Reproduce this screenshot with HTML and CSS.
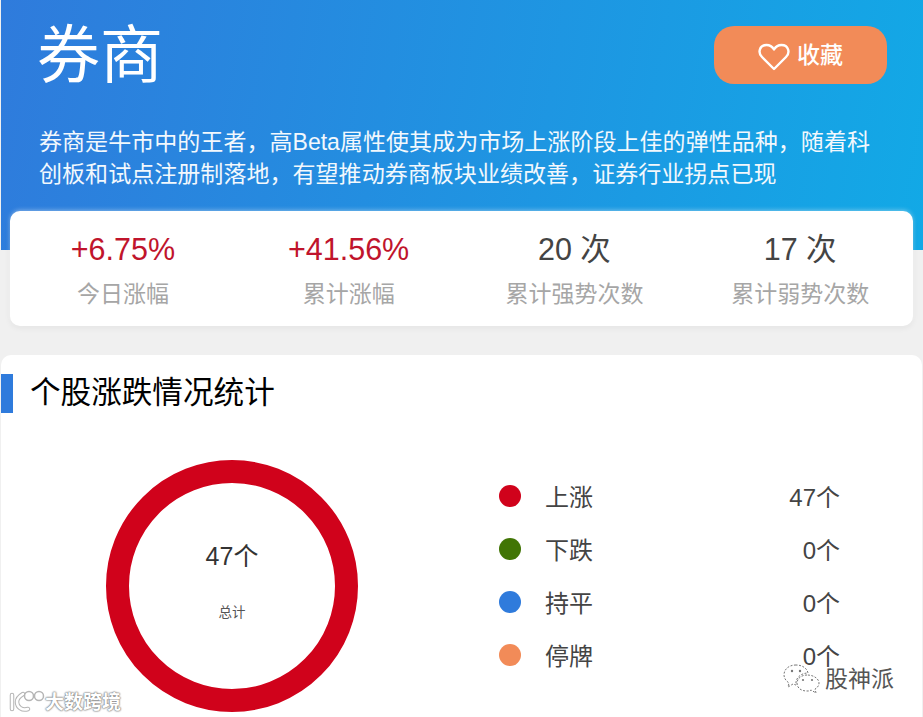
FILE: index.html
```html
<!DOCTYPE html>
<html lang="zh-CN">
<head>
    <meta charset="UTF-8">
    <meta name="viewport" content="width=device-width, initial-scale=1.0">
    <title>券商</title>
    <link rel="stylesheet" href="styles.css">
</head>
<body>
    <div class="hero">
        <div class="hero-top">
            <h1>券商</h1>
            <button class="fav">
                <svg class="heart" viewBox="0 0 32 28" width="32" height="28">
                    <path d="M16 26 L4 14 C-0.5 9.5 1.5 2 8.500 2 C12 2 14.500 4 16 6.500 C17.500 4 20 2 23.500 2 C30.500 2 32.500 9.500 28 14 Z" fill="none" stroke="#fff" stroke-width="2.4" stroke-linejoin="round"/>
                </svg>
                <span class="fav-text">收藏</span>
            </button>
        </div>
        <p class="desc">券商是牛市中的王者，高Beta属性使其成为市场上涨阶段上佳的弹性品种，随着科创板和试点注册制落地，有望推动券商板块业绩改善，证券行业拐点已现</p>
    </div>

    <div class="stats">
        <div class="stat">
            <div class="num up">+6.75%</div>
            <div class="label">今日涨幅</div>
        </div>
        <div class="stat">
            <div class="num up">+41.56%</div>
            <div class="label">累计涨幅</div>
        </div>
        <div class="stat">
            <div class="num">20 次</div>
            <div class="label">累计强势次数</div>
        </div>
        <div class="stat">
            <div class="num">17 次</div>
            <div class="label">累计弱势次数</div>
        </div>
    </div>

    <div class="panel">
        <h2>个股涨跌情况统计</h2>
        <div class="panel-body">
            <div class="donut">
                <div class="donut-num">47个</div>
                <div class="donut-label">总计</div>
            </div>
            <div class="legend">
                <div class="legend-row"><span class="dot red"></span><span class="name">上涨</span><span class="count">47个</span></div>
                <div class="legend-row"><span class="dot green"></span><span class="name">下跌</span><span class="count">0个</span></div>
                <div class="legend-row"><span class="dot blue"></span><span class="name">持平</span><span class="count">0个</span></div>
                <div class="legend-row"><span class="dot orange"></span><span class="name">停牌</span><span class="count">0个</span></div>
            </div>
        </div>
    </div>

    <!-- watermarks over the picture -->
    <div class="mark-left">
        <svg viewBox="0 0 36 24" width="36" height="24">
            <g fill="none" stroke="#b5b5b5" stroke-width="4.500" stroke-linecap="round">
                <path d="M3 6 L3 20"/>
                <path d="M14 5 C9 8 8 10 8 13 C8 18 13 22 19 20"/>
            </g>
            <g fill="none" stroke="#fff" stroke-width="2.500" stroke-linecap="round">
                <path d="M3 6 L3 20"/>
                <path d="M14 5 C9 8 8 10 8 13 C8 18 13 22 19 20"/>
            </g>
            <circle cx="20" cy="7" r="4.500" fill="#fff" stroke="#b5b5b5" stroke-width="1.500"/>
            <circle cx="30" cy="7" r="4.500" fill="#fff" stroke="#b5b5b5" stroke-width="1.500"/>
        </svg>
        <span>大数跨境</span>
    </div>
    <div class="mark-right">
        <svg viewBox="0 0 38 32" width="38" height="32">
            <path d="M14 2 C7 2 2 6 2 12 C2 15 4 18 7 20 L6 24 L11 21 C12 21 13 22 14 22 C13 15 19 10 26 10 C25 5 20 2 14 2 Z" fill="#fff" stroke="#777" stroke-dasharray="2 1.500"/>
            <path d="M25 12 C19 12 15 16 15 20 C15 25 19 28 25 28 C27 28 28 28 29 27 L34 30 L33 26 C35 25 37 23 37 20 C37 16 32 12 25 12 Z" fill="#fff" stroke="#777" stroke-dasharray="2 1.500"/>
            <circle cx="10" cy="8" r="1.200" fill="#777"/>
            <circle cx="18" cy="8" r="1.200" fill="#777"/>
            <circle cx="21" cy="17" r="1.100" fill="#777"/>
            <circle cx="30" cy="17" r="1.100" fill="#777"/>
        </svg>
        <span class="mark-text">股神派</span>
    </div>
</body>
</html>
```

FILE: styles.css
```css
html, body {
    height: 717px;
    overflow: hidden;
}
body {
    position: relative;
    margin: 0;
    padding-left: 1px;
    box-sizing: border-box;
    font-family: "Liberation Sans", "Noto Sans CJK SC", sans-serif;
    background-color: #f0f0f0;
}
.hero {
    height: 250px;
    box-sizing: border-box;
    padding: 20px 36px 0 38px;
    background: linear-gradient(100deg, #2f7bdc, #12a9e6);
    color: #fff;
}
.hero-top {
    display: flex;
    justify-content: space-between;
    align-items: flex-start;
}
h1 {
    margin: 0 0 0 -2px;
    font-size: 63px;
    font-weight: 400;
    line-height: 70px;
}
.fav {
    display: flex;
    align-items: center;
    justify-content: center;
    gap: 7px;
    width: 173px;
    height: 58px;
    margin-top: 6px;
    border: none;
    border-radius: 20px;
    background-color: #f28b58;
    color: #fff;
    font-family: inherit;
    font-size: 23px;
    font-weight: 500;
}
.heart {
    margin-top: 4px;
}
.fav-text {
    margin-bottom: 4px;
}
.desc {
    margin: 36px 0 0;
    font-size: 23.060px;
    line-height: 32px;
    color: #f2f8fd;
}
.stats {
    display: grid;
    grid-template-columns: repeat(4, 1fr);
    width: 903px;
    height: 115px;
    margin: -39px 0 0 9px;
    background-color: #fff;
    border-radius: 10px;
    box-shadow: 0 -1px 4px rgba(255, 255, 255, 0.4), 0 2px 6px rgba(0, 0, 0, 0.06);
    position: relative;
    text-align: center;
}
.stat {
    padding-top: 20px;
}
.num {
    font-size: 30.500px;
    line-height: 36px;
    color: #444;
}
.num.up {
    color: #c0142c;
}
.label {
    margin-top: 11px;
    font-size: 23px;
    line-height: 32px;
    color: #a6a6a6;
}
.panel {
    width: 921px;
    height: 362px;
    margin-top: 29px;
    background-color: #fff;
    border-radius: 10px 10px 0 0;
}
h2 {
    margin: 0;
    padding: 17px 0 0 29px;
    font-size: 30.600px;
    font-weight: 400;
    line-height: 41px;
    color: #000;
    position: relative;
}
h2::before {
    content: "";
    position: absolute;
    left: 0;
    top: 19px;
    width: 12px;
    height: 39px;
    background-color: #2f7bdc;
}
.panel-body {
    display: flex;
    padding: 47px 0 0 105px;
}
.donut {
    width: 206px;
    height: 206px;
    border: 23px solid #d0021b;
    border-radius: 50%;
    text-align: center;
    flex-shrink: 0;
}
.donut-num {
    margin-top: 57px;
    font-size: 25px;
    line-height: 32px;
    color: #333;
}
.donut-label {
    margin-top: 33px;
    font-size: 13.500px;
    line-height: 16px;
    color: #555;
}
.legend {
    width: 342px;
    margin-left: 141px;
    padding-top: 9px;
}
.legend-row {
    display: flex;
    align-items: center;
    height: 53px;
    font-size: 24px;
    color: #444;
}
.dot {
    width: 22px;
    height: 22px;
    border-radius: 50%;
    margin-right: 24px;
}
.red { background-color: #d0021b; }
.green { background-color: #417505; }
.blue { background-color: #2f7bdc; }
.orange { background-color: #f28b58; }
.name {
    flex: 1;
}
.count {
    margin-right: 1px;
}
.mark-left {
    position: absolute;
    left: 9px;
    top: 687px;
    display: flex;
    align-items: center;
    gap: 0;
    font-size: 19px;
    font-weight: 700;
    color: #fff;
    text-shadow: 0 0 1px #777, 0 0 2px #888, 0 0 2px #888;
}
.mark-right {
    position: absolute;
    left: 782px;
    top: 660px;
    display: flex;
    align-items: center;
    gap: 5px;
    font-size: 23px;
    color: #555;
    text-shadow: 0 0 2px #fff;
}
.mark-text {
    margin-bottom: 4px;
}
```
